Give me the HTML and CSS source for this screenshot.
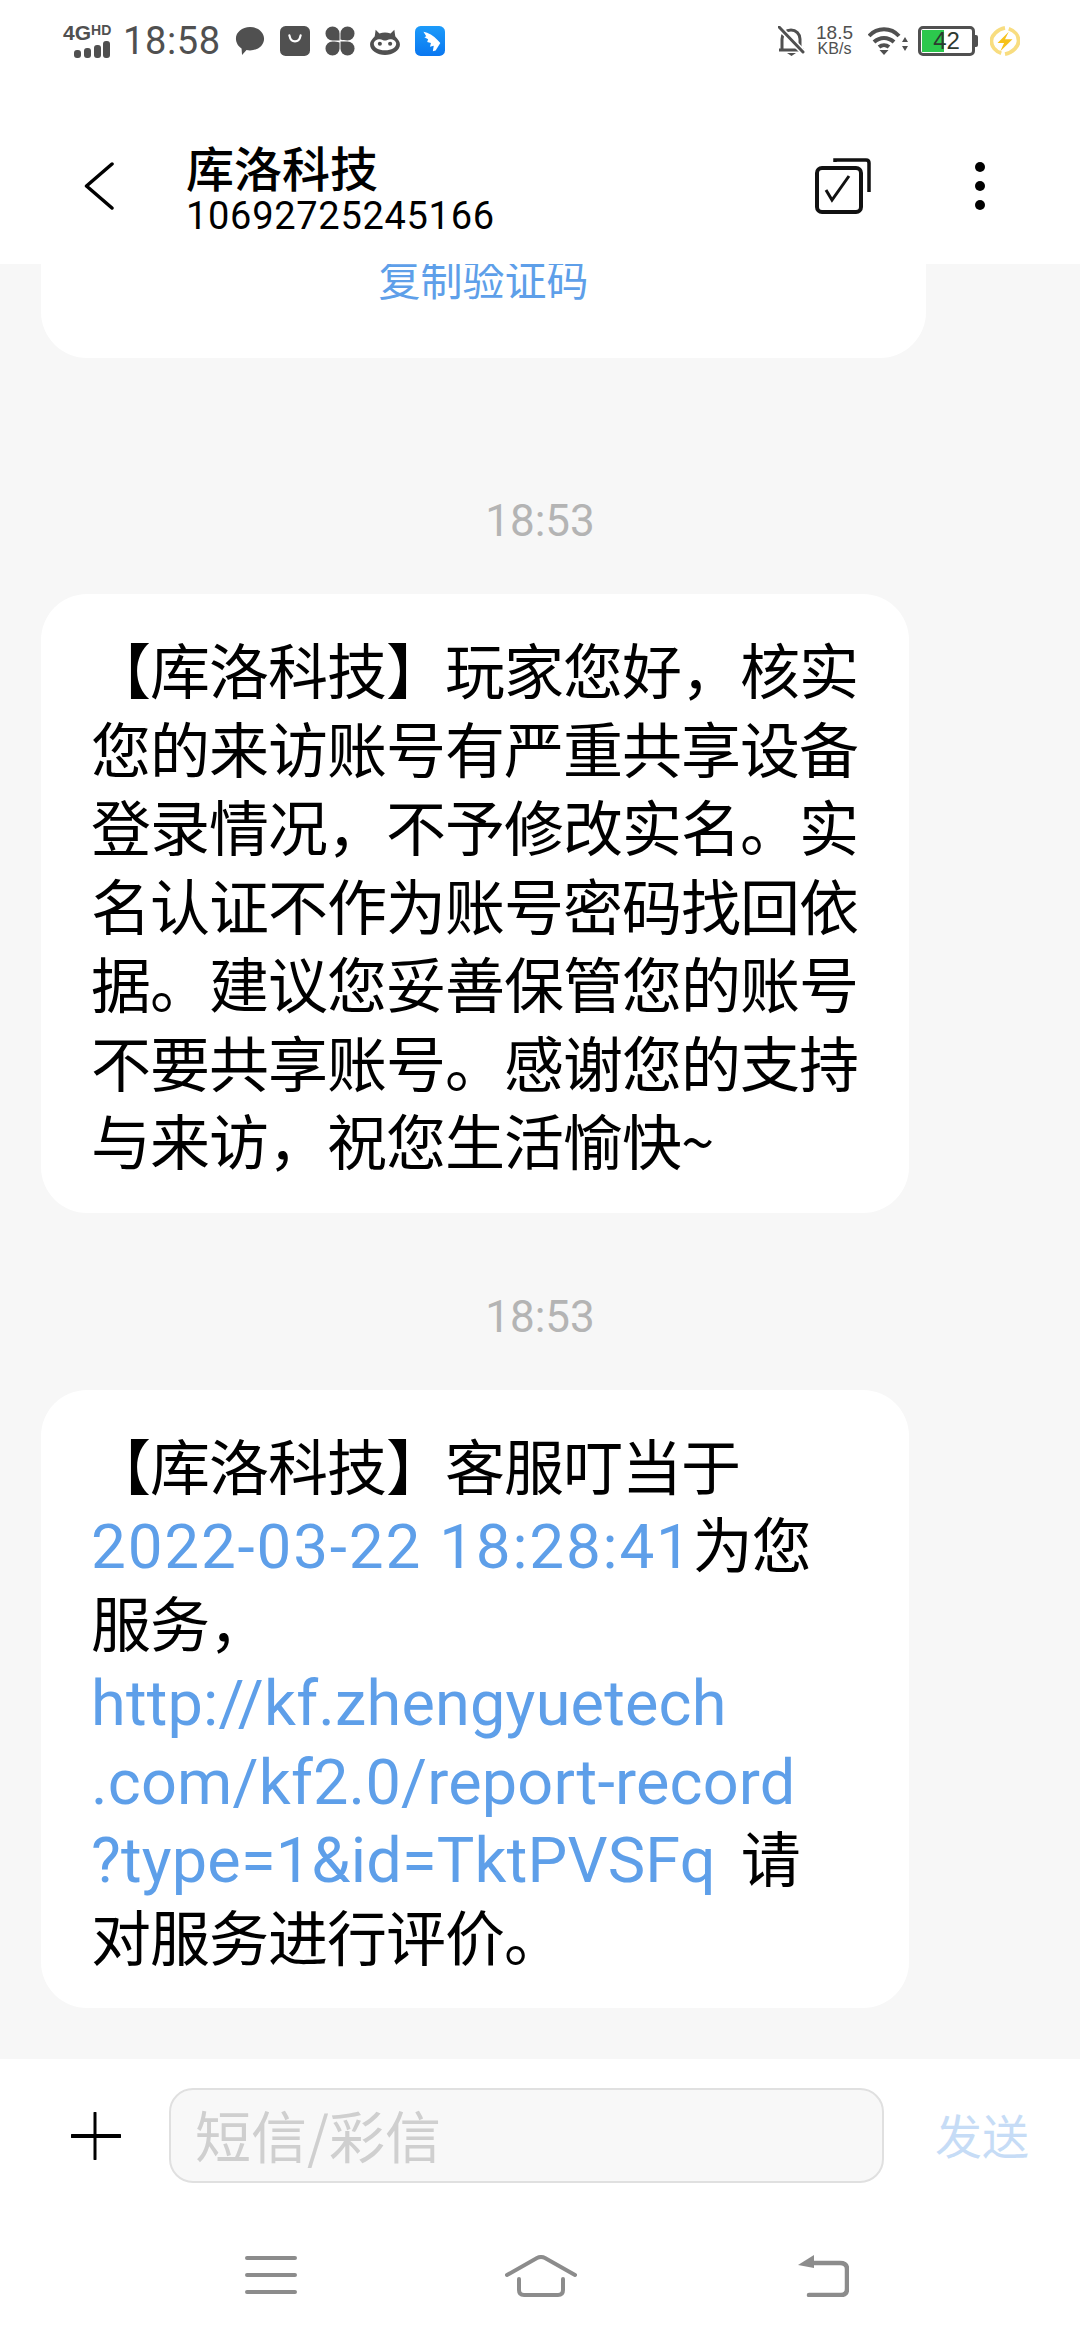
FILE: index.html
```html
<!DOCTYPE html>
<html lang="zh-CN">
<head>
  <meta charset="UTF-8" />
  <title>库洛科技</title>
  <link rel="stylesheet" href="styles.css">
</head>
<body>
  <div class="phone">
    <div class="statusbar">
      <div class="status-left">
        <div class="net"><span class="net-label">4G<sup>HD</sup></span>
          <svg class="bars" width="36" height="17" viewBox="0 0 36 17"><rect x="0" y="9" width="7" height="8" rx="3"/><rect x="10" y="7" width="7" height="10" rx="3"/><rect x="20" y="4" width="7" height="13" rx="3"/><rect x="29" y="0" width="7" height="17" rx="3"/></svg>
        </div>
        <span class="clock">18:58</span>
        <svg class="app" width="30" height="30" viewBox="0 0 32 32"><path d="M16 1c8.500 0 15 5.500 15 12.500S24.500 26 16 26c-1.300 0-2.500-.1-3.700-.4L7.500 31l-.5-7.100C3.300 21.600 1 17.300 1 13.500 1 6.500 7.500 1 16 1z" fill="#505050"/></svg>
        <svg class="app" width="30" height="30" viewBox="0 0 32 32"><rect x="0" y="0" width="32" height="32" rx="6" fill="#505050"/><path d="M10 10c1 5 3 6.500 6 6.500s5-1.500 6-6.500" fill="none" stroke="#fff" stroke-width="2.400" stroke-linecap="round"/></svg>
        <svg class="app" width="30" height="30" viewBox="0 0 32 32" fill="#505050"><path d="M15.500 15.500H8A7.500 7.500 0 1 1 15.500 8z"/><path d="M16.500 14.500V8A7.500 7.500 0 1 1 24 15.500c-3 0-5-.4-7.500-1z"/><path d="M16.500 16.500H24A7.500 7.500 0 1 1 16.500 24z"/><path d="M15.500 17.500V24A7.500 7.500 0 1 1 8 16.500c3 0 5 .4 7.500 1z"/></svg>
        <svg class="app" width="30" height="28" viewBox="0 0 32 30"><path d="M6 3l4 4c2-.7 4-1 6-1s4 .3 6 1l4-4 1 7c2 2.500 5 5 5 9 0 6-8 11-16 11S0 25 0 19c0-4 3-6.500 5-9z" fill="#505050"/><path d="M4 18c0-3 3-5 6.500-5 2 0 4 1.500 5.500 1.500s3.500-1.500 5.500-1.500c3.500 0 6.500 2 6.500 5 0 4-5 7-12 7S4 22 4 18z" fill="#fff"/><circle cx="10.500" cy="18" r="2.200" fill="#505050"/><circle cx="21.500" cy="18" r="2.200" fill="#505050"/></svg>
        <svg class="app" width="30" height="30" viewBox="0 0 32 32"><defs><linearGradient id="blue" x1="0" y1="0" x2="0" y2="1"><stop offset="0" stop-color="#1c9bfa"/><stop offset="1" stop-color="#0a77f0"/></linearGradient></defs><rect x="0" y="0" width="32" height="32" rx="6" fill="url(#blue)"/><path d="M9 6c5 1 11 4 15 9l3 3-5 8-3 1 1-6-4 1 1-4-4-1 1-3-4-2 2-1z" fill="#fff"/></svg>
      </div>
      <div class="status-right">
        <svg class="bell" width="27" height="30" viewBox="0 0 27 30"><path d="M4 23V13c0-5 4-9 9-9s9 4 9 9v10M1 24h25" fill="none" stroke="#505050" stroke-width="3"/><path d="M1 1l25 26" stroke="#fff" stroke-width="6"/><path d="M1 1l24 25" stroke="#505050" stroke-width="3" stroke-linecap="round"/><path d="M9 27h9l-4.500 3z" fill="#505050"/></svg>
        <div class="speed"><span>18.5</span><span class="unit">KB/s</span></div>
        <svg class="wifi" width="40" height="28" viewBox="0 0 40 28"><path d="M1 9c8-9 22-9 30 0M6 15c6-5.500 14-5.500 20 0M11 20c3-2.500 7-2.500 10 0" fill="none" stroke="#505050" stroke-width="4"/><path d="M11.500 23h9L16 28zM34 15h6l-3-5zM34 19h6l-3 5z" fill="#505050"/></svg>
        <div class="battery"><div class="battery-body"><div class="battery-fill"></div><span class="battery-num">42</span></div><div class="battery-tip"></div></div>
        <svg class="bolt" width="30" height="30" viewBox="0 0 32 32"><path d="M20 3C26 5 30.500 10 30.500 16S24 28.500 16 30M12 29C6 27 1.500 22 1.500 16S8 3.500 16 2" fill="none" stroke="#f8dd80" stroke-width="4"/><path d="M20 6L8 18h7l-4 9 13-13h-8z" fill="#f6c21c"/></svg>
      </div>
    </div>

    <header class="topbar">
      <svg class="back" width="30" height="48" viewBox="0 0 30 48"><path d="M28 2L2.500 24 28 46" fill="none" stroke="#000" stroke-width="3.500" stroke-linecap="round" stroke-linejoin="round"/></svg>
      <div class="contact">
        <div class="contact-name">库洛科技</div>
        <div class="contact-num">10692725245166</div>
      </div>
      <svg class="select" width="56" height="56" viewBox="0 0 56 56"><path d="M20 4V2h31q3 0 3 3v29" fill="none" stroke="#111" stroke-width="3.500"/><rect x="2" y="10" width="44" height="44" rx="5" fill="#fff" stroke="#111" stroke-width="4"/><path d="M11 32l6 10 17-24" fill="none" stroke="#111" stroke-width="3"/></svg>
      <div class="more"><i></i><i></i><i></i></div>
    </header>

    <main class="thread">
      <div class="bubble bubble-cut"><div class="copy">复制验证码</div></div>

      <div class="time time-far">18:53</div>
      <div class="bubble">【库洛科技】玩家您好，核实您的来访账号有严重共享设备登录情况，不予修改实名。实名认证不作为账号密码找回依据。建议您妥善保管您的账号不要共享账号。感谢您的支持与来访，祝您生活愉快~</div>

      <div class="time">18:53</div>
      <div class="bubble">【库洛科技】客服叮当于<br><span class="link link-date">2022-03-22 18:28:41</span>为您<br>服务，<br><span class="link">http://kf.zhengyuetech<br>.com/kf2.0/report-record<br>?type=1&amp;id=TktPVSFq</span> &nbsp;请<br>对服务进行评价。</div>
    </main>

    <div class="composer">
      <svg class="plus" width="50" height="48" viewBox="0 0 50 48"><path d="M1 24h48" stroke="#000" stroke-width="4" stroke-linecap="round"/><path d="M24 1v46" stroke="#000" stroke-width="3" stroke-linecap="round"/></svg>
      <div class="input">短信/彩信</div>
      <div class="send">发送</div>
    </div>

    <nav class="navbar">
      <svg class="nav-menu" width="52" height="40" viewBox="0 0 52 40"><path d="M2 3h48M2 20h48M2 37h48" stroke="#8c8c8c" stroke-width="4" stroke-linecap="round"/></svg>
      <svg class="nav-home" width="72" height="42" viewBox="0 0 72 42"><path d="M2 20L32 3q4-2 8 0l30 17" fill="none" stroke="#8c8c8c" stroke-width="4" stroke-linecap="round"/><path d="M14 24v11q0 5 5 5h34q5 0 5-5V24" fill="none" stroke="#8c8c8c" stroke-width="4" stroke-linecap="round"/></svg>
      <svg class="nav-back" width="52" height="42" viewBox="0 0 52 42"><path d="M14 8h29q7 0 7 6v20q0 6-6 6H12" fill="none" stroke="#8c8c8c" stroke-width="4.500" stroke-linecap="round"/><path d="M17 0v13L1 10z" fill="#8c8c8c"/></svg>
    </nav>
  </div>
</body>
</html>
```

FILE: styles.css
```css
* {
  box-sizing: border-box;
}
html, body {
  margin: 0;
  padding: 0;
}
body {
  font-family: "Noto Sans CJK SC", "Noto Sans", sans-serif;
  background: #fff;
}
.phone {
  width: 1080px;
  height: 2340px;
  display: flex;
  flex-direction: column;
  overflow: hidden;
  background: #f7f7f7;
}

/* status bar */
.statusbar {
  height: 82px;
  flex: none;
  background: #fff;
  display: flex;
  justify-content: space-between;
  align-items: center;
  padding: 0 60px 0 63px;
  color: #505050;
}
.status-left, .status-right {
  display: flex;
  align-items: center;
}
.net {
  width: 47px;
  display: flex;
  flex-direction: column;
  align-items: flex-end;
  margin-right: 13px;
}
.net-label {
  width: 47px;
  font: bold 21px/16px "Liberation Sans", sans-serif;
  white-space: nowrap;
}
.net-label sup {
  font-size: 14px;
  line-height: 0;
  vertical-align: 5px;
}
.bars {
  fill: #505050;
  margin-top: 0;
}
.clock {
  font: 38px/40px "Roboto", sans-serif;
  letter-spacing: 0.600px;
  margin-right: 14px;
}
.app {
  margin-right: 15px;
}
.app:last-child {
  margin-right: 0;
}
.status-right svg {
  flex: none;
}
.speed {
  display: flex;
  flex-direction: column;
  align-items: center;
  font: 19px/16px "Liberation Sans", sans-serif;
  margin: 0 15px 0 11px;
}
.speed .unit {
  font-size: 16px;
}
.battery {
  display: flex;
  align-items: center;
  margin: 0 12px 0 10px;
}
.battery-body {
  position: relative;
  width: 57px;
  height: 30px;
  border: 3px solid #505050;
  border-radius: 5px;
  padding: 1px;
}
.battery-fill {
  width: 44%;
  height: 100%;
  background: #2cc84d;
}
.battery-num {
  position: absolute;
  inset: 0;
  text-align: center;
  font: 24px/24px "Liberation Sans", sans-serif;
  color: #2e3a30;
}
.battery-tip {
  width: 3px;
  height: 12px;
  background: #505050;
  border-radius: 0 2px 2px 0;
}

/* header */
.topbar {
  height: 182px;
  flex: none;
  background: #fff;
  display: flex;
  align-items: center;
  padding: 26px 0 0 84px;
  position: relative;
  z-index: 1;
}
.back {
  flex: none;
  margin-right: 72px;
}
.contact {
  flex: 1;
  color: #000;
  padding-top: 6px;
}
.contact-name {
  font-size: 48px;
  line-height: 50px;
  font-weight: 500;
}
.contact-num {
  font: 38px/42px "Roboto", sans-serif;
  letter-spacing: 0.700px;
  margin-top: 4px;
}
.select {
  flex: none;
  margin-right: 104px;
}
.more {
  width: 10px;
  margin-right: 95px;
  display: flex;
  flex-direction: column;
  gap: 9px;
}
.more i {
  height: 10px;
  background: #000;
  border-radius: 50%;
}

/* messages */
.thread {
  flex: 1;
  min-height: 0;
  padding: 0 0 0 41px;
}
.bubble {
  width: 868px;
  background: #fff;
  border-radius: 46px;
  padding: 35px 48px 34px 50px;
  font-size: 60px;
  letter-spacing: -1px;
  line-height: 78.500px;
  color: #000;
}
.bubble-cut {
  width: 885px;
  height: 94px;
  padding: 0;
  border-radius: 0 0 46px 46px;
  text-align: center;
}
.copy {
  font-size: 42px;
  letter-spacing: 0;
  line-height: 28px;
  color: #5e9fe9;
}
.time {
  width: 998px;
  text-align: center;
  font: 44px/50px "Roboto", sans-serif;
  color: #b4b4b4;
  margin: 79px 0 48px;
}
.time-far {
  margin-top: 138px;
}
.link {
  font-family: "Roboto", sans-serif;
  font-size: 63px;
  letter-spacing: 0.200px;
  line-height: 1;
  color: #5e9fe9;
}
.link-date {
  font-size: 62px;
  letter-spacing: 1.800px;
}

/* composer */
.composer {
  height: 158px;
  flex: none;
  background: #fff;
  display: flex;
  align-items: center;
  padding: 0 0 5px 71px;
}
.plus {
  flex: none;
  margin-right: 48px;
}
.input {
  width: 715px;
  height: 95px;
  flex: none;
  background: #f8f8f8;
  border: 2px solid #e0e0e0;
  border-radius: 24px;
  padding-left: 24px;
  font-size: 56px;
  line-height: 88px;
  color: #cfcfcf;
}
.send {
  margin-left: 51px;
  padding-bottom: 4px;
  font-size: 47px;
  line-height: 56px;
  color: #c6dcf6;
}

/* nav */
.navbar {
  height: 123px;
  flex: none;
  background: #fff;
  display: flex;
  align-items: flex-start;
  padding: 38px 0 0 245px;
}
.nav-menu {
  margin-right: 208px;
}
.nav-home {
  margin-right: 220px;
}
```
